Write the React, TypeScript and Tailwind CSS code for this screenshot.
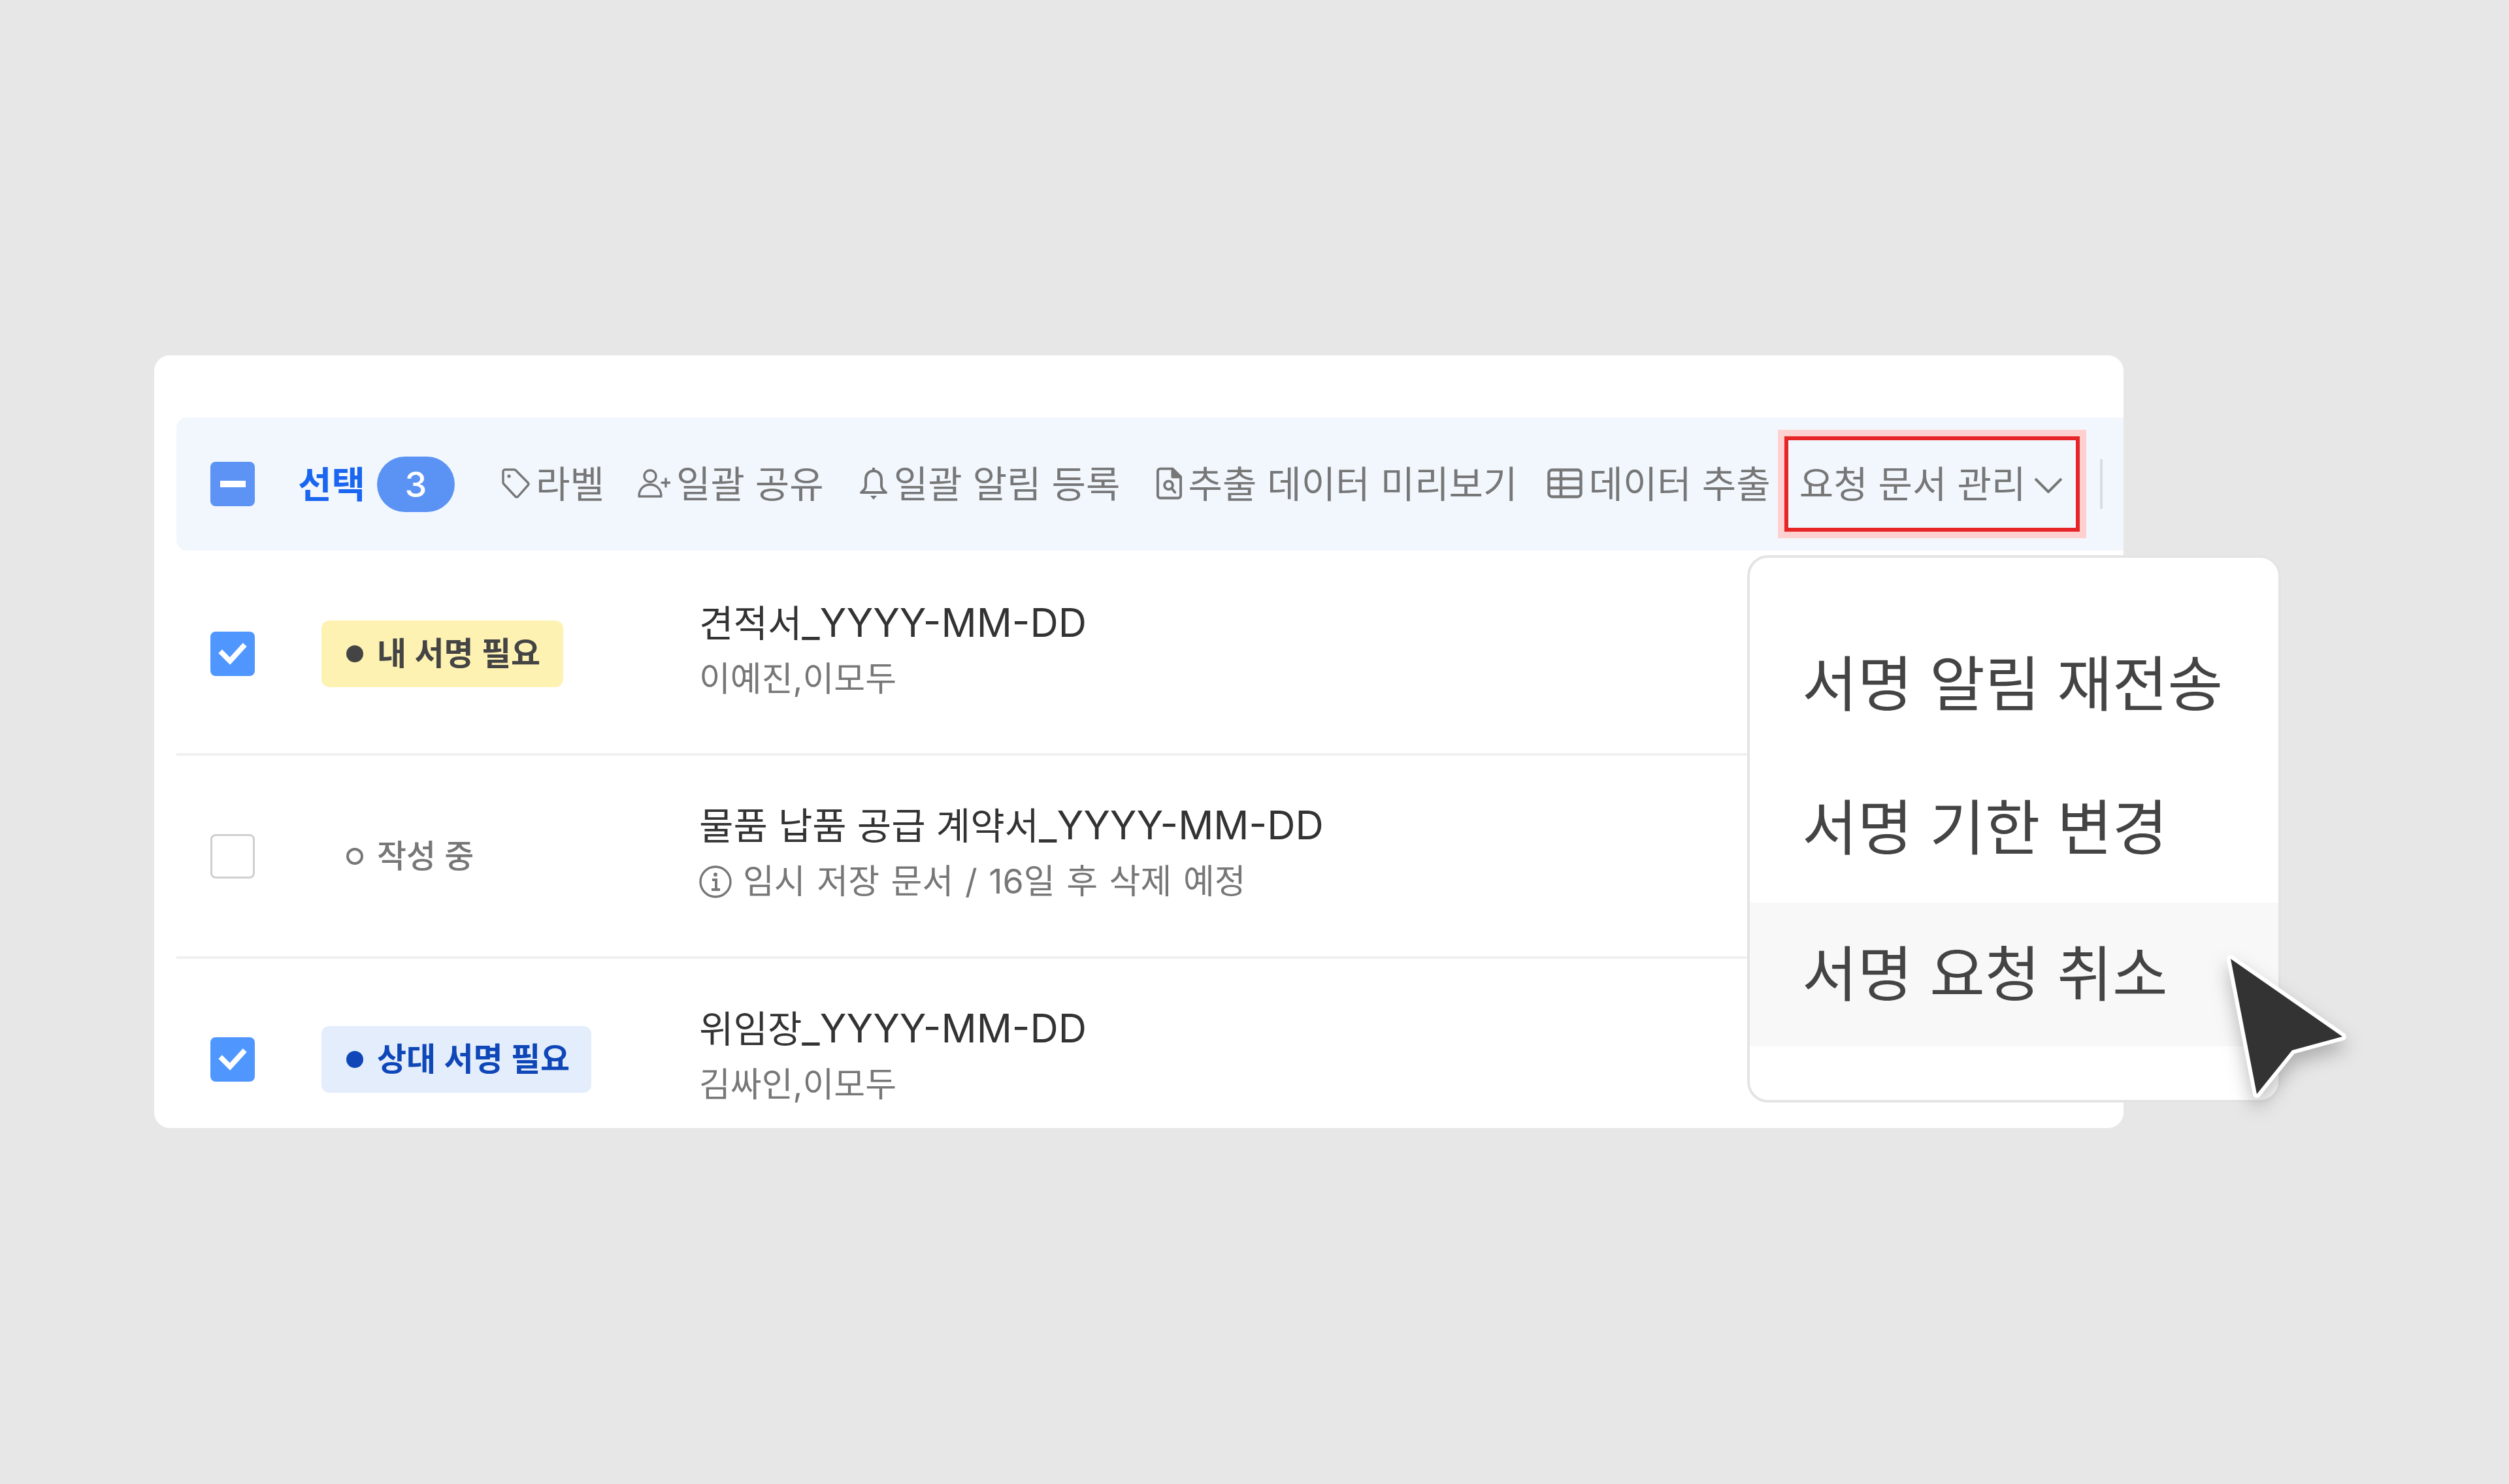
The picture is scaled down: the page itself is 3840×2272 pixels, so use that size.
import type { ReactNode } from "react";

const font = "font-['Inter','Noto_Sans_CJK_KR','Noto_Sans',sans-serif]";

function TagIcon() {
  return (
    <svg viewBox="0 0 44 46" className="h-[46px] w-[44px]" fill="none" stroke="#777" strokeWidth="3.4">
      <path d="M3 5 a3 3 0 0 1 3-3 H20 a3 3 0 0 1 2.3 1 L41 22 a3 3 0 0 1 0 4 L26 43 a3 3 0 0 1-4.4 0 L4 24 a3 3 0 0 1-1-2.3 Z" strokeLinejoin="round" />
      <circle cx="12" cy="12" r="2.6" fill="#777" stroke="none" />
    </svg>
  );
}

function UserPlusIcon() {
  return (
    <svg viewBox="0 0 50 44" className="h-[44px] w-[50px]" fill="none" stroke="#777" strokeWidth="3.4" strokeLinecap="round">
      <circle cx="19" cy="11" r="9" />
      <path d="M2 42 c0-11 7-18 17-18 s17 7 17 18 Z" strokeLinejoin="round" />
      <path d="M37 21 h12 M43 15 v12" />
    </svg>
  );
}

function BellIcon() {
  return (
    <svg viewBox="0 0 44 50" className="h-[50px] w-[44px]" fill="none" stroke="#777" strokeWidth="4" strokeLinejoin="round">
      <path d="M22 6 c-8 0-12 6-12 13 v10 c0 4-3 7-7 10 H41 c-4-3-7-6-7-10 V19 c0-7-4-13-12-13 Z" />
      <path d="M22 1 v5" />
      <path d="M17 44 h10 l-5 6 Z" fill="#777" stroke="none" />
    </svg>
  );
}

function FileSearchIcon() {
  return (
    <svg viewBox="0 0 40 50" className="h-[50px] w-[39px]" fill="none" stroke="#777" strokeWidth="4" strokeLinejoin="round">
      <path d="M2 6 a4 4 0 0 1 4-4 H25 L38 15 V44 a4 4 0 0 1-4 4 H6 a4 4 0 0 1-4-4 Z" />
      <path d="M25 2 L38 15 H25 Z" fill="#777" />
      <circle cx="19" cy="28" r="6.5" />
      <path d="M24 33 L29 39" strokeLinecap="round" />
    </svg>
  );
}

function TableIcon() {
  return (
    <svg viewBox="0 0 54 46" className="h-[46px] w-[54px]" fill="none" stroke="#777" strokeWidth="4.4">
      <rect x="2.5" y="2.5" width="49" height="41" rx="5" />
      <path d="M2 16 H52 M2 30 H52 M21 2 V44" />
    </svg>
  );
}

function InfoIcon() {
  return (
    <svg viewBox="0 0 50 50" className="h-[50px] w-[50px] shrink-0" fill="none" stroke="#777" strokeWidth="3.4">
      <circle cx="25" cy="25" r="23" />
      <circle cx="25" cy="14" r="3" fill="#777" stroke="none" />
      <path d="M20 22 h6 v15 M19 37 h13" strokeWidth="4" />
    </svg>
  );
}

function ToolbarItem({ icon, label, className }: { icon: ReactNode; label: string; className?: string }) {
  return (
    <div className={`flex items-center gap-[9px] ${className ?? ""}`}>
      <div className="-mt-[5px] flex">{icon}</div>
      <span className="whitespace-nowrap">{label}</span>
    </div>
  );
}

function CheckBox({ checked }: { checked: boolean }) {
  if (!checked) {
    return <div className="h-[68px] w-[68px] shrink-0 rounded-lg border-[3px] border-[#cfcfcf] bg-white" />;
  }
  return (
    <div className="flex h-[68px] w-[68px] shrink-0 items-center justify-center rounded-lg bg-[#4f97ff]">
      <svg viewBox="0 0 44 34" className="h-[34px] w-[44px]" fill="none" stroke="#fff" strokeWidth="8" strokeLinecap="square">
        <path d="M6 16 L18 28 L38 6" />
      </svg>
    </div>
  );
}

function Row({ checked, status, title, sub, className }: { checked: boolean; status: ReactNode; title: ReactNode; sub: ReactNode; className: string }) {
  return (
    <div className={`flex shrink-0 items-center pl-[52px] ${className}`}>
      <CheckBox checked={checked} />
      <div className="ml-[102px] w-[578px] shrink-0">{status}</div>
      <div className="-mt-[9px] flex flex-col">
        <div className="mb-[5px] text-[57px] leading-[80px] text-[#333]">{title}</div>
        <div className="text-[52px] leading-[80px] text-[#777]">{sub}</div>
      </div>
    </div>
  );
}

function Badge({ label, className, dot, text }: { label: string; className: string; dot: string; text: string }) {
  return (
    <div className={`flex h-[102px] items-center gap-[21px] rounded-xl pl-[38px] ${className}`}>
      <span className={`h-[26px] w-[26px] shrink-0 rounded-full ${dot}`} />
      <span className={`whitespace-nowrap text-[49px] font-semibold ${text}`}>{label}</span>
    </div>
  );
}

const datePart = <span className="text-[60px]">_YYYY-MM-DD</span>;

export default function App() {
  return (
    <div className={`min-h-[2272px] bg-[#e7e7e7] pl-[236px] pt-[544px] ${font}`}>
      <div className="relative w-[3014px]">
        <div className="flex h-[1183px] flex-col overflow-hidden rounded-3xl bg-white pl-[34px] pt-[95px]">
          <div className="flex h-[204px] shrink-0 items-center rounded-l-2xl bg-[#f2f7fe] pl-[52px] pt-[2px] text-[57px] text-[#777]">
            <div className="-mt-[2px] flex h-[68px] w-[68px] shrink-0 items-center justify-center rounded-lg bg-[#5c93f5]">
              <span className="h-[10px] w-[39px] bg-white" />
            </div>
            <span className="ml-[66px] whitespace-nowrap text-[56px] font-bold text-[#1a66f0]">선택</span>
            <span className="-mt-[2px] ml-[18px] flex h-[85px] w-[119px] shrink-0 items-center justify-center rounded-full bg-[#5b93f5] text-[54px] font-medium text-white">3</span>
            <ToolbarItem className="ml-[71px]" icon={<TagIcon />} label="라벨" />
            <ToolbarItem className="ml-[51px]" icon={<UserPlusIcon />} label="일괄 공유" />
            <ToolbarItem className="ml-[54px]" icon={<BellIcon />} label="일괄 알림 등록" />
            <ToolbarItem className="ml-[56px]" icon={<FileSearchIcon />} label="추출 데이터 미리보기" />
            <ToolbarItem className="ml-[46px]" icon={<TableIcon />} label="데이터 추출" />
            <div className="-mt-[2px] ml-[21px] flex h-[146px] w-[452px] shrink-0 items-center border-[6px] border-[#e52528] pl-[17px] pt-[2px] shadow-[0_0_0_10px_#ffd0d0]">
              <span className="whitespace-nowrap">요청 문서 관리</span>
              <svg viewBox="0 0 44 24" className="ml-[13px] mt-[1px] h-[24px] w-[44px] shrink-0" fill="none" stroke="#777" strokeWidth="4">
                <path d="M2 2 L22 22 L42 2" />
              </svg>
            </div>
            <span className="-mt-[2px] ml-[31px] h-[76px] w-[4px] shrink-0 bg-[#d8dde3]" />
          </div>
          <Row
            className="h-[314px] border-b-4 border-[#f0f0f0] pt-[6px]"
            checked
            status={<Badge label="내 서명 필요" className="w-[370px] bg-[#fef2b3]" dot="bg-[#444]" text="text-[#444]" />}
            title={<>견적서{datePart}</>}
            sub="이예진,이모두"
          />
          <Row
            className="h-[311px] border-b-4 border-[#f0f0f0]"
            checked={false}
            status={
              <div className="flex items-center gap-[21px] pl-[38px]">
                <span className="h-[26px] w-[26px] rounded-full border-4 border-[#777]" />
                <span className="text-[49px] font-medium text-[#777]">작성 중</span>
              </div>
            }
            title={<>물품 납품 공급 계약서{datePart}</>}
            sub={
              <span className="flex items-center gap-[17px] [word-spacing:3px]">
                <InfoIcon />
                임시 저장 문서 / 16일 후 삭제 예정
              </span>
            }
          />
          <Row
            className="h-[307px]"
            checked
            status={<Badge label="상대 서명 필요" className="w-[413px] bg-[#e4edfc]" dot="bg-[#0f47b8]" text="text-[#0f47b8]" />}
            title={<>위임장{datePart}</>}
            sub="김싸인,이모두"
          />
        </div>

        {/* dropdown over the card */}
        <div className="absolute left-[2438px] top-[306px] flex h-[838px] w-[817px] flex-col rounded-[32px] border-4 border-[#e4e4e4] bg-white pb-[82px] pt-[88px] text-[92px] text-[#444]">
          <div className="flex h-[220px] items-center pb-[8px] pl-[80px]">서명 알림 재전송</div>
          <div className="flex h-[220px] items-center pb-[8px] pl-[80px]">서명 기한 변경</div>
          <div className="flex h-[220px] items-center bg-[#f8f8f8] pl-[80px]">서명 요청 취소</div>
        </div>

        {/* cursor */}
        <svg viewBox="0 0 190 225" className="absolute left-[3168px] top-[914px] h-[225px] w-[190px] overflow-visible drop-shadow-[0_14px_14px_rgba(0,0,0,0.25)]">
          <path d="M10 10 L181 129 L104 150 L50 217 Z" fill="#333" stroke="#fff" strokeWidth="12" strokeLinejoin="round" paintOrder="stroke" />
        </svg>
      </div>
    </div>
  );
}
